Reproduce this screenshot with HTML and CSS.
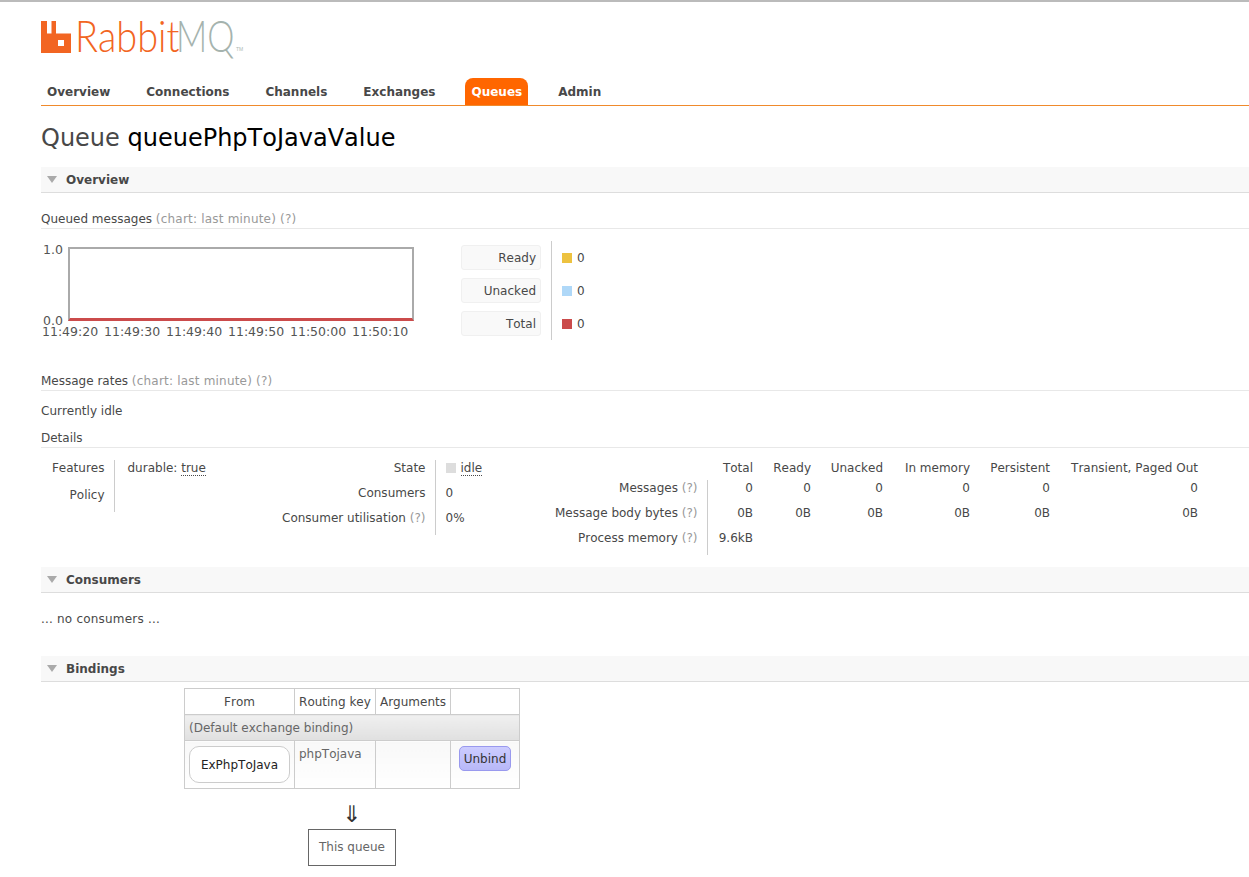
FILE: index.html
```html
<!DOCTYPE html>
<html lang="en">
<head>
    <meta charset="UTF-8">
    <title>RabbitMQ Management</title>
    <link rel="stylesheet" href="styles.css">
</head>
<body>

    <div id="logo">
        <svg class="logo-icon" width="30" height="32" viewBox="0 0 30 32"><path fill="#f26522" fill-rule="evenodd" d="M0 0h6v12.5h4.5V0H15v12.5h15V32H0zM17 19v6h6v-6z"/></svg>
        <span class="logo-rabbit">Rabbit</span><span class="logo-mq">MQ</span><span class="logo-tm">TM</span>
    </div>

    <ul id="tabs">
        <li><a href="#">Overview</a></li>
        <li><a href="#">Connections</a></li>
        <li><a href="#">Channels</a></li>
        <li><a href="#">Exchanges</a></li>
        <li><a href="#" class="selected">Queues</a></li>
        <li><a href="#">Admin</a></li>
    </ul>

    <div id="main">
        <h1>Queue <b>queuePhpToJavaValue</b></h1>

        <h2 class="section-head"><span class="triangle"></span>Overview</h2>
        <div class="section-body">
            <h3>Queued messages <span class="grey">(chart: last minute) (?)</span></h3>
            <div class="chart-row">
                <div class="chart">
                    <div class="chart-top">
                        <div class="y-labels"><span>1.0</span><span>0.0</span></div>
                        <div class="plot"></div>
                    </div>
                    <div class="x-labels">
                        <span>11:49:20</span><span>11:49:30</span><span>11:49:40</span><span>11:49:50</span><span>11:50:00</span><span>11:50:10</span>
                    </div>
                </div>
                <table class="legend">
                    <tr><th><div>Ready</div></th><td><span class="swatch ready"></span>0</td></tr>
                    <tr><th><div>Unacked</div></th><td><span class="swatch unacked"></span>0</td></tr>
                    <tr><th><div>Total</div></th><td><span class="swatch total"></span>0</td></tr>
                </table>
            </div>

            <h3 class="rates">Message rates <span class="grey">(chart: last minute) (?)</span></h3>
            <p class="idle">Currently idle</p>

            <h3 class="details">Details</h3>
            <div class="facts">
                <table class="facts-table t-features">
                    <tr class="features-row"><th>Features</th><td>durable: <abbr>true</abbr></td></tr>
                    <tr><th>Policy</th><td></td></tr>
                </table>
                <table class="facts-table t-state">
                    <tr><th>State</th><td><span class="swatch idle-box"></span><abbr>idle</abbr></td></tr>
                    <tr><th>Consumers</th><td>0</td></tr>
                    <tr><th>Consumer utilisation <span class="grey">(?)</span></th><td>0%</td></tr>
                </table>
                <table class="facts-table t-messages">
                    <colgroup>
                        <col class="m-label"><col class="m-total"><col class="m-ready"><col class="m-unacked"><col class="m-memory"><col class="m-persistent"><col class="m-transient">
                    </colgroup>
                    <tr class="head"><th></th><td>Total</td><td>Ready</td><td>Unacked</td><td>In memory</td><td>Persistent</td><td>Transient, Paged Out</td></tr>
                    <tr><th>Messages <span class="grey">(?)</span></th><td>0</td><td>0</td><td>0</td><td>0</td><td>0</td><td>0</td></tr>
                    <tr><th>Message body bytes <span class="grey">(?)</span></th><td>0B</td><td>0B</td><td>0B</td><td>0B</td><td>0B</td><td>0B</td></tr>
                    <tr><th>Process memory <span class="grey">(?)</span></th><td>9.6kB</td><td></td><td></td><td></td><td></td><td></td></tr>
                </table>
            </div>
        </div>

        <h2 class="section-head consumers-head"><span class="triangle"></span>Consumers</h2>
        <p class="no-consumers">... no consumers ...</p>

        <h2 class="section-head bindings-head"><span class="triangle"></span>Bindings</h2>
        <div class="bindings">
            <table class="list">
                <tr class="list-head"><th class="c-from">From</th><th class="c-key">Routing key</th><th class="c-args">Arguments</th><th class="c-act"></th></tr>
                <tr class="default-row"><td colspan="4">(Default exchange binding)</td></tr>
                <tr class="binding-row">
                    <td><span class="exchange">ExPhpToJava</span></td>
                    <td class="key">phpTojava</td>
                    <td></td>
                    <td class="act"><button class="unbind">Unbind</button></td>
                </tr>
            </table>
            <div class="arrow">⇓</div>
            <div class="this-queue">This queue</div>
        </div>
    </div>

</body>
</html>
```

FILE: styles.css
```css
body {
    font-family: 'DejaVu Sans', Verdana, sans-serif;
    font-size: 12px;
    font-kerning: none;
    color: #484848;
    margin: 0;
    padding: 0;
    border-top: 2px solid #bbb;
}
#logo {
    display: flex;
    align-items: flex-end;
    height: 32px;
    margin: 19px 0 0 41px;
}
.logo-icon {
    flex: none;
}
.logo-rabbit, .logo-mq {
    font-family: 'Lato', sans-serif;
    font-weight: 300;
    font-size: 44px;
    line-height: 28px;
    display: block;
    transform-origin: left bottom;
    height: 32px;
}
.logo-rabbit {
    color: #f26522;
    margin-left: 4px;
    width: 101px;
    transform: scaleX(0.86);
}
.logo-mq {
    color: #a5b3ae;
    width: 60px;
    transform: scaleX(0.78);
}
.logo-tm {
    font-family: 'Liberation Sans', sans-serif;
    font-size: 5px;
    line-height: 8px;
    color: #acb9b4;
}
#tabs {
    list-style: none;
    display: flex;
    height: 27px;
    margin: 25px 0 0 41px;
    padding: 0;
    border-bottom: 1px solid #f08a2c;
}
#tabs a {
    display: block;
    height: 27px;
    line-height: 28px;
    padding: 0 6px;
    margin-right: 24px;
    font-weight: bold;
    font-size: 12px;
    color: #484848;
    text-decoration: none;
    border-radius: 8px 8px 0 0;
}
#tabs a.selected {
    background: #ff6600;
    color: #fff;
}
#main {
    margin-left: 41px;
}
h1 {
    font-size: 24px;
    font-weight: normal;
    line-height: 30px;
    margin: 17px 0 14px;
}
h1 b {
    font-weight: normal;
    color: #000;
}
.section-head {
    display: flex;
    align-items: center;
    height: 25px;
    margin: 0;
    background: #f8f8f8;
    border-bottom: 1px solid #ddd;
    font-size: 12px;
    font-weight: bold;
}
.triangle {
    width: 0;
    height: 0;
    margin: 0 9px 0 6px;
    border-left: 5.5px solid transparent;
    border-right: 5.5px solid transparent;
    border-top: 7px solid #aaa;
}
h3 {
    font-size: 12px;
    font-weight: normal;
    line-height: 15px;
    margin: 19px 0 0;
    padding-bottom: 1px;
    border-bottom: 1px solid #e8e8e8;
}
h3 .grey {
    letter-spacing: 0.2px;
}
.grey {
    color: #999;
}
.chart-row {
    display: flex;
    margin-top: 12px;
}
.chart {
    width: 420px;
    font-size: 12.5px;
    color: #545454;
}
.chart-top {
    display: flex;
    height: 74px;
    margin-top: 6px;
}
.y-labels {
    width: 27px;
    height: 84px;
    margin-top: -4px;
    display: flex;
    flex-direction: column;
    justify-content: space-between;
    padding-left: 2px;
    box-sizing: border-box;
    line-height: 13px;
}
.plot {
    box-sizing: border-box;
    width: 346px;
    height: 74px;
    border: 2px solid #aaa;
    border-bottom: 3px solid #cb4b4b;
    background: #fff;
}
.x-labels {
    display: flex;
    margin: 4px 0 0 1px;
    line-height: 13px;
}
.x-labels span {
    width: 62px;
    flex: none;
}
.legend {
    border-collapse: collapse;
    height: 99px;
}
.legend th {
    font-weight: normal;
    padding: 0 10px 0 0;
    border-right: 1px solid #ccc;
}
.legend th div {
    box-sizing: border-box;
    width: 80px;
    height: 25px;
    line-height: 25px;
    text-align: right;
    padding-right: 4px;
    background: #f9f9f9;
    border: 1px solid #f0f0f0;
    border-radius: 3px;
}
.legend td {
    padding: 0 0 0 10px;
    white-space: nowrap;
}
.swatch {
    display: inline-block;
    width: 10px;
    height: 10px;
    margin-right: 5px;
    vertical-align: -1px;
}
.ready { background: #edc240; }
.unacked { background: #afd8f8; }
.total { background: #cb4b4b; }
.idle-box { background: #ddd; }
.rates {
    margin-top: 34px;
}
.idle {
    line-height: 15px;
    margin: 13px 0 0;
}
.details {
    margin-top: 12px;
}
abbr {
    border-bottom: 1px dotted #484848;
}
.facts {
    display: flex;
    align-items: flex-start;
    margin-top: 12px;
}
.facts-table {
    border-collapse: collapse;
    line-height: 15px;
}
.facts-table th {
    font-weight: normal;
    text-align: right;
    padding: 1px 9px 9px 0;
    white-space: nowrap;
    border-right: 1px solid #ccc;
}
.facts-table td {
    padding: 1px 0 9px 10px;
    white-space: nowrap;
}
.t-features {
    width: 200px;
}
.t-features th {
    width: 73px;
    box-sizing: border-box;
}
.t-features td {
    padding-left: 13px;
}
.features-row th, .features-row td {
    padding-bottom: 11px;
}
.t-state {
    width: 303px;
}
.t-state th {
    width: 194px;
    box-sizing: border-box;
}
.t-messages {
    table-layout: fixed;
    width: 654px;
}
.m-label { width: 163px; }
.m-total { width: 46px; }
.m-ready { width: 58px; }
.m-unacked { width: 72px; }
.m-memory { width: 87px; }
.m-persistent { width: 80px; }
.m-transient { width: 148px; }
.t-messages td {
    text-align: right;
}
.t-messages tr.head th {
    border-right: none;
    padding-bottom: 4px;
}
.t-messages tr.head td {
    padding-bottom: 4px;
}
.consumers-head {
    margin-top: 12px;
}
.no-consumers {
    line-height: 15px;
    letter-spacing: 0.2px;
    margin: 19px 0 0;
}
.bindings-head {
    margin-top: 29px;
}
.bindings {
    width: 479px;
    margin-top: 6px;
}
.list {
    border-collapse: collapse;
    margin-left: 143px;
    width: 336px;
}
.list th, .list td {
    border: 1px solid #ccc;
    padding: 6px 4px 4px;
    line-height: 15px;
}
.list th {
    font-weight: normal;
    background: #fff;
    height: 15px;
    white-space: nowrap;
}
.c-from { width: 101px; }
.c-act { width: 60px; }
.default-row td {
    background: linear-gradient(#f0f0f0, #e0e0e0);
    color: #666;
    height: 15px;
}
.list .binding-row td {
    background: linear-gradient(#f8f8f8, #fff);
    vertical-align: top;
    height: 37px;
    padding: 5px 4px 4px;
}
.list .binding-row .key {
    color: #666;
    padding-top: 6px;
}
.exchange {
    display: block;
    box-sizing: border-box;
    height: 37px;
    line-height: 36px;
    text-align: center;
    background: #fff;
    border: 1px solid #ccc;
    border-radius: 10px;
    color: #222;
}
.act {
    text-align: center;
}
.unbind {
    font: inherit;
    box-sizing: border-box;
    width: 52px;
    height: 25px;
    padding: 1px 0 0;
    color: #333;
    background: linear-gradient(#ccccff, #b8b8f8);
    border: 1px solid #9999ee;
    border-radius: 5px;
}
.arrow {
    margin-left: 143px;
    width: 336px;
    text-align: center;
    font-size: 23px;
    line-height: 29px;
    margin-top: 11px;
    color: #333;
}
.this-queue {
    box-sizing: border-box;
    width: 88px;
    height: 37px;
    line-height: 35px;
    margin: 0 0 0 267px;
    text-align: center;
    color: #666;
    border: 1px solid #666;
}
```
